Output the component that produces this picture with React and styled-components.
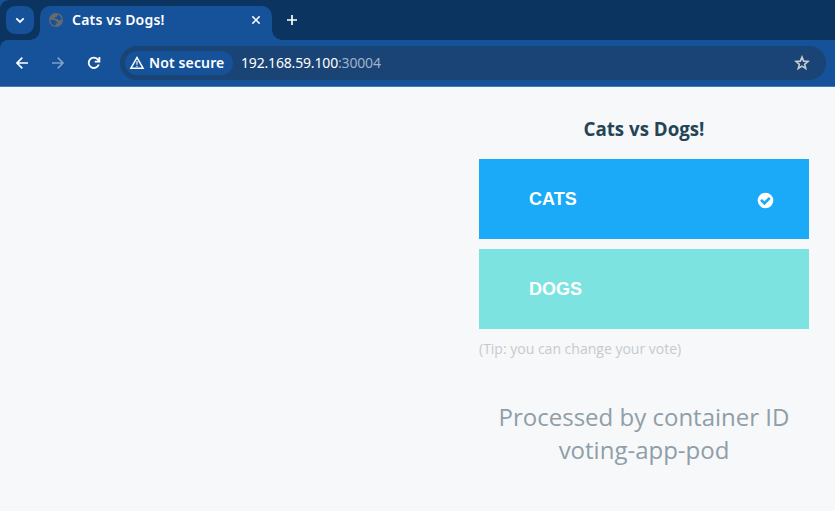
import React from "react";
import styled, { createGlobalStyle } from "styled-components";

const Global = createGlobalStyle`
  * { box-sizing: border-box; }
  html, body { margin: 0; padding: 0; }
  body { width: 835px; height: 511px; overflow: hidden; background: #f7f8f9; }
`;

const Window = styled.div`
  display: flex;
  flex-direction: column;
  width: 835px;
  height: 511px;
  background: #f7f8f9;
  font-family: "Open Sans", sans-serif;
`;

const Chrome = styled.header`
  flex: none;
  background: linear-gradient(#155299 0 20px, #0c3460 20px);
`;

const TabStrip = styled.div`
  display: flex;
  height: 40px;
  padding: 6px 0 0 6px;
  border-top-left-radius: 9px;
  background: #0c3460;
`;

const TabSearch = styled.button`
  display: grid;
  place-items: center;
  width: 28px;
  height: 28px;
  padding: 0;
  margin-right: 6px;
  border: 0;
  border-radius: 9px;
  background: #155299;
`;

const Tab = styled.div`
  position: relative;
  display: flex;
  align-items: center;
  width: 232px;
  height: 34px;
  padding: 0 10px 6px 8px;
  border-radius: 10px 10px 0 0;
  background: #155299;

  &::before,
  &::after {
    content: "";
    position: absolute;
    bottom: 0;
    width: 10px;
    height: 10px;
  }
  &::before {
    left: -10px;
    background: radial-gradient(circle at 0 0, transparent 9.5px, #155299 10px);
  }
  &::after {
    right: -10px;
    background: radial-gradient(circle at 100% 0, transparent 9.5px, #155299 10px);
  }
`;

const TabTitle = styled.span`
  flex: 1;
  margin-left: 8px;
  color: #fff;
  font: 600 14px/20px "Noto Sans", sans-serif;
  letter-spacing: 0.2px;
  white-space: nowrap;
`;

const NewTab = styled.button`
  display: grid;
  place-items: center;
  width: 28px;
  height: 28px;
  margin-left: 6px;
  padding: 0;
  border: 0;
  background: none;
`;

const Toolbar = styled.nav`
  display: flex;
  align-items: center;
  height: 47px;
  padding: 0 9px 1px 14px;
  border-top-left-radius: 8px;
  background: linear-gradient(#155299 46px, #4a7ab5 46px);
`;

const NavButton = styled.button`
  display: grid;
  place-items: center;
  width: 16px;
  height: 16px;
  margin-right: 20px;
  padding: 0;
  border: 0;
  background: none;
  opacity: ${(p) => (p.$dim ? 0.45 : 1)};
`;

const AddressBar = styled.div`
  display: flex;
  align-items: center;
  flex: 1;
  height: 34px;
  margin-left: -2px;
  padding: 0 16px 0 5px;
  border-radius: 17px;
  background: #194475;
`;

const Security = styled.div`
  display: flex;
  align-items: center;
  width: 108px;
  height: 24px;
  padding-left: 4px;
  border-radius: 12px;
  background: #155299;
  color: #fff;
  font: 600 14px/24px "Noto Sans", sans-serif;
  letter-spacing: 0.13px;
  white-space: nowrap;

  svg { margin-right: 4px; flex: none; }
`;

const Url = styled.span`
  flex: 1;
  margin-left: 8px;
  color: #fff;
  font: 400 14px/24px "Noto Sans", sans-serif;
  letter-spacing: -0.17px;
`;

const Port = styled.span`
  color: #9fb2c9;
`;

const Page = styled.main`
  display: flex;
  justify-content: flex-end;
  flex: 1;
  padding: 30px 26px 0 0;
`;

const Poll = styled.section`
  display: flex;
  flex-direction: column;
  width: 330px;
`;

const Heading = styled.h3`
  margin: 0 0 18px;
  color: #254457;
  font-size: 18.72px;
  font-weight: 700;
  line-height: 24px;
  text-align: center;
`;

const Choice = styled.button`
  display: flex;
  align-items: center;
  justify-content: space-between;
  height: 80px;
  margin-bottom: 10px;
  padding: 0 35px 0 50px;
  border: 0;
  background: ${(p) => p.$color};
  color: #fff;
  font: 700 18px/24px "Liberation Sans", Arial, sans-serif;
  text-align: left;

  svg { margin-top: 3px; }
`;

const Tip = styled.p`
  margin: 0;
  color: #c4cbd0;
  font-size: 14px;
  line-height: 20px;
`;

const Hostname = styled.p`
  margin: 41px 0 0;
  color: #8f9ea8;
  font-size: 24px;
  line-height: 33px;
  text-align: center;
`;

const Stroke = ({ size = 16, width = 1.8, color = "#fff", d }) => (
  <svg width={size} height={size} viewBox="0 0 16 16" fill="none" stroke={color} strokeWidth={width}>
    <path d={d} />
  </svg>
);

const Globe = () => (
  <svg width="16" height="16" viewBox="0 0 16 16">
    <circle cx="8" cy="8" r="7" fill="#666a6d" />
    <path
      d="M2.400 8h3.300c1.400 0 2 .7 2 1.700h1.600v1.700H7.600v2.200C4.500 13.500 2.300 11 2.400 8zM9.900 2.800c2.200.8 3.600 2.700 3.700 4.900h-1.300c-.5.7-1.600.8-2.400.1-.4-.6-.3-1.100-1-1.100H7.100V5h1.100c.9 0 1-.5 1-1.100.4 0 .7-.4.7-1.100z"
      fill="#155299"
    />
  </svg>
);

const Warning = () => (
  <svg width="16" height="16" viewBox="0 0 16 16">
    <path d="M8 2.600 14.100 13.200H1.900z" fill="none" stroke="#fff" strokeWidth="1.500" />
    <path d="M8 6v3.800M8 10.700v1.400" stroke="#fff" strokeWidth="1.300" opacity=".85" />
  </svg>
);

const Star = () => (
  <svg width="16" height="16" viewBox="0 0 16 16">
    <path
      d="m8 2.100 1.650 4.050 4.350.35-3.350 2.800 1.070 4.220L8 11.150l-3.720 2.370L5.350 9.300 2 6.500l4.350-.350z"
      fill="none"
      stroke="#c8ccd0"
      strokeWidth="1.600"
    />
  </svg>
);

const CheckCircle = () => (
  <svg width="17" height="17" viewBox="0 0 17 17">
    <circle cx="8.500" cy="8.500" r="7.800" fill="#fff" />
    <path d="m4 7.900 3.400 3.400 5.400-5.400" fill="none" stroke="#1aaaf8" strokeWidth="2.700" />
  </svg>
);

export default function App() {
  return (
    <>
      <Global />
      <Window>
        <Chrome>
          <TabStrip>
            <TabSearch aria-label="Search tabs">
              <Stroke d="m4.300 6.300 3.700 3.700 3.700-3.700" />
            </TabSearch>
            <Tab>
              <Globe />
              <TabTitle>Cats vs Dogs!</TabTitle>
              <Stroke size={12} width={2} d="m3.200 3.200 9.600 9.600m0-9.600-9.600 9.600" />
            </Tab>
            <NewTab aria-label="New tab">
              <Stroke width={1.700} d="M8 3v10M3 8h10" />
            </NewTab>
          </TabStrip>
          <Toolbar>
            <NavButton aria-label="Back">
              <Stroke width={1.700} d="M14 8H3m5.300-5.300L3 8l5.300 5.300" />
            </NavButton>
            <NavButton aria-label="Forward" $dim>
              <Stroke width={1.700} d="M2 8h11M7.700 2.700 13 8l-5.300 5.300" />
            </NavButton>
            <NavButton aria-label="Reload">
              <Stroke d="M12.800 9.500A5.200 5.200 0 1 1 12 4.600L13.200 6M13.400 2v4.700H8.700" />
            </NavButton>
            <AddressBar>
              <Security>
                <Warning />
                Not secure
              </Security>
              <Url>
                192.168.59.100<Port>:30004</Port>
              </Url>
              <Star />
            </AddressBar>
          </Toolbar>
        </Chrome>
        <Page>
          <Poll>
            <Heading>Cats vs Dogs!</Heading>
            <Choice $color="#1aaaf8">
              CATS
              <CheckCircle />
            </Choice>
            <Choice $color="#7ce3e1">DOGS</Choice>
            <Tip>(Tip: you can change your vote)</Tip>
            <Hostname>
              Processed by container ID
              <br />
              voting-app-pod
            </Hostname>
          </Poll>
        </Page>
      </Window>
    </>
  );
}
